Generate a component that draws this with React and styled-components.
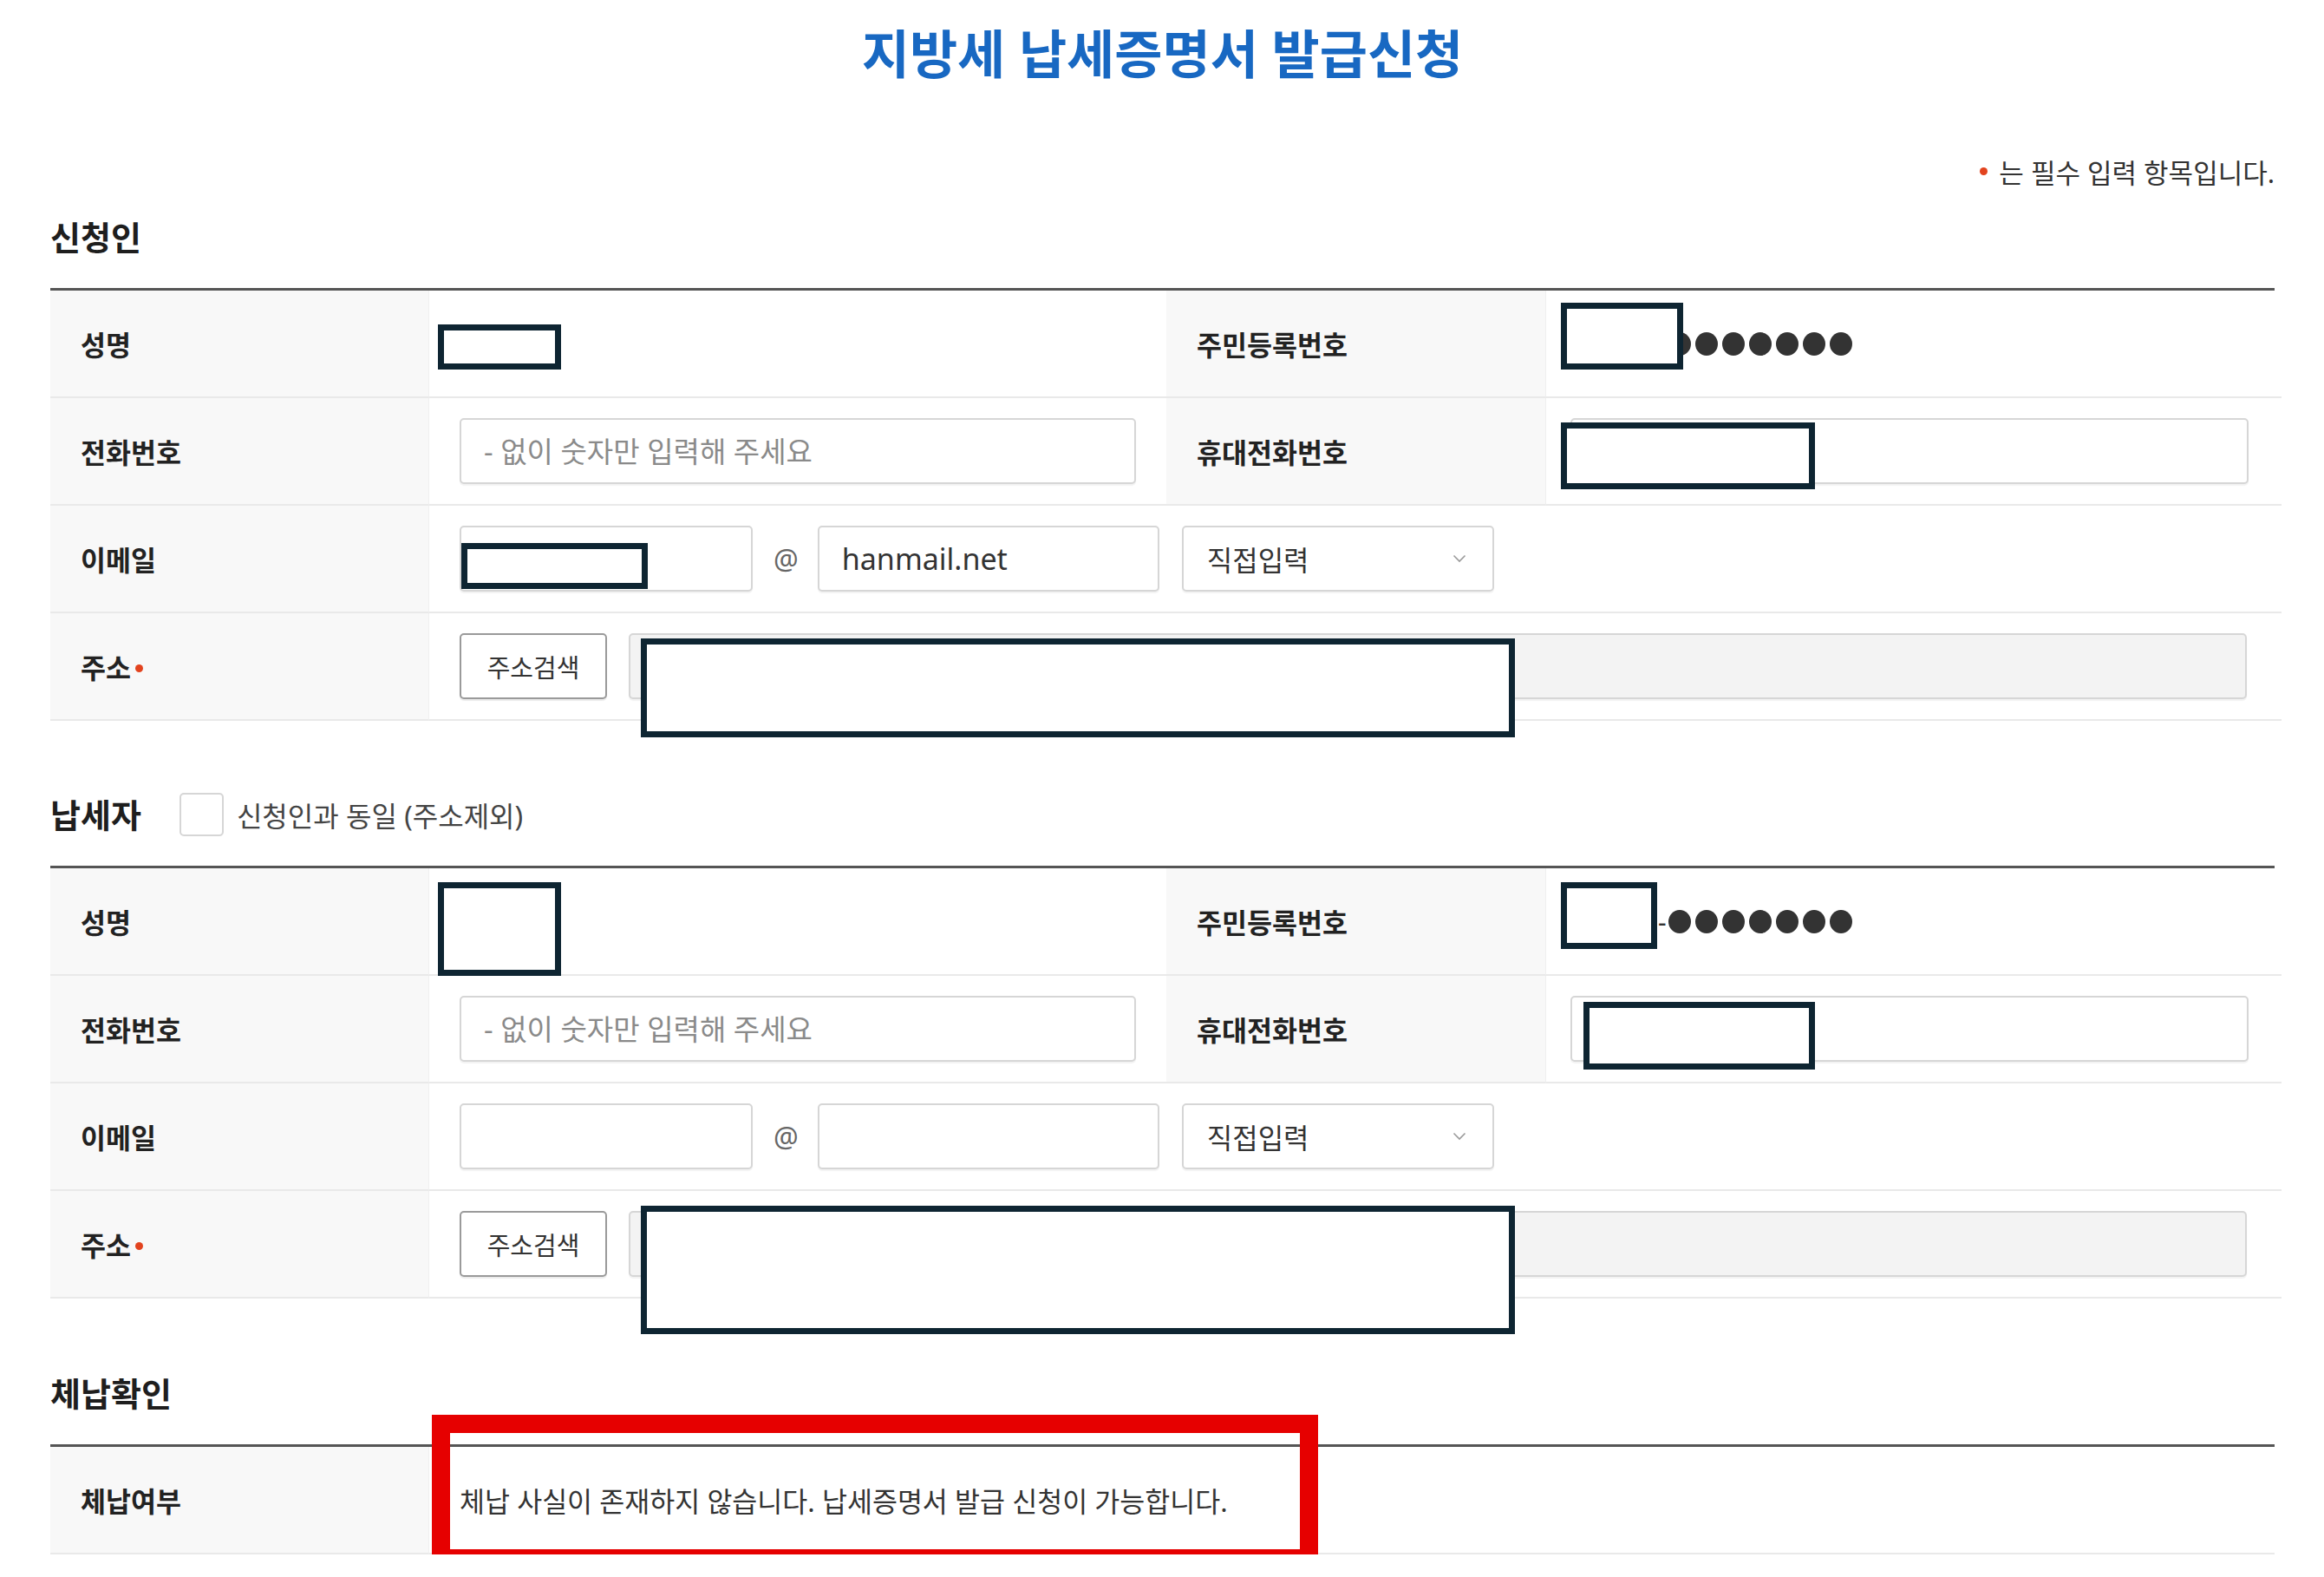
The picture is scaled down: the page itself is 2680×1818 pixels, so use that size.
import React from "react";
import styled, { createGlobalStyle } from "styled-components";

const GlobalStyle = createGlobalStyle`
  html, body { margin: 0; padding: 0; background: #ffffff; }
  body {
    font-family: "Noto Sans", "Noto Sans CJK KR", sans-serif;
    color: #222222;
  }
  * { box-sizing: border-box; }
`;

const Page = styled.div`
  width: 2565px;
  margin-left: 58px;
  position: relative;
`;

const Title = styled.h1`
  margin: 0;
  height: 125px;
  line-height: 125px;
  text-align: center;
  font-size: 60px;
  font-weight: 700;
  color: #1868c2;
`;

const RequiredNote = styled.div`
  display: flex;
  justify-content: flex-end;
  align-items: center;
  gap: 13px;
  margin-top: 52px;
  height: 40px;
  font-size: 31px;
  color: #333333;
`;

const RedDot = styled.span`
  display: inline-block;
  width: 9px;
  height: 9px;
  border-radius: 50%;
  background: #e2431e;
  flex: none;
  margin-top: ${(p) => p.$down || 0}px;
`;

const SectionHead = styled.div`
  display: flex;
  align-items: center;
  height: 50px;
  margin-top: ${(p) => p.$top}px;
  margin-bottom: 34px;
`;

const Heading = styled.h2`
  margin: 0;
  font-size: 38px;
  font-weight: 700;
  color: #1e1e1e;
  line-height: 50px;
`;

const CheckBox = styled.span`
  display: inline-block;
  width: 51px;
  height: 50px;
  margin-left: 44px;
  border: 2px solid #d6d6d6;
  border-radius: 5px;
  background: #ffffff;
`;

const CheckLabel = styled.span`
  margin-left: 15px;
  font-size: 32px;
  color: #444444;
`;

const Table = styled.div`
  display: grid;
  grid-template-columns: 436px 851px 437px 1fr;
  border-top: 3px solid #555555;
`;

const LabelCell = styled.div`
  display: flex;
  align-items: center;
  height: 124px;
  padding-left: 35px;
  background: #f8f8f8;
  border-bottom: 2px solid #e9e9e9;
  font-size: 31.5px;
  font-weight: 700;
  color: #222222;
  gap: 5px;
`;

const ValueCell = styled.div`
  position: relative;
  display: flex;
  align-items: center;
  height: 124px;
  padding: 0 ${(p) => p.$pr ?? 38}px 0 ${(p) => p.$pl ?? 35}px;
  background: #ffffff;
  border-bottom: 2px solid #e9e9e9;
  border-left: 1px solid #efefef;
  grid-column: span ${(p) => p.$span || 1};
  font-size: ${(p) => p.$fs || 32}px;
  color: #333333;
`;

const TextInput = styled.input`
  height: 76px;
  width: ${(p) => (p.$w ? `${p.$w}px` : "100%")};
  flex: ${(p) => (p.$grow ? 1 : "none")};
  padding: 0 26px;
  border: 2px solid #d6d6d6;
  border-radius: 5px;
  box-shadow: 0 2px 1px rgba(0, 0, 0, 0.05);
  background: ${(p) => (p.$disabled ? "#f3f3f3" : "#ffffff")};
  font-family: inherit;
  font-size: ${(p) => p.$fs || 33}px;
  color: #333333;
  outline: none;
  &::placeholder {
    color: #8a8a8a;
  }
`;

const At = styled.span`
  margin: 0 22px 0 24px;
  font-size: 32px;
  color: #666666;
`;

const SelectBox = styled.div`
  display: flex;
  align-items: center;
  justify-content: space-between;
  width: 360px;
  height: 76px;
  margin-left: 26px;
  padding: 0 30px 0 27px;
  border: 2px solid #d6d6d6;
  border-radius: 5px;
  box-shadow: 0 2px 1px rgba(0, 0, 0, 0.05);
  font-size: 32px;
  color: #333333;
`;

const SearchButton = styled.button`
  flex: none;
  width: 170px;
  height: 76px;
  margin-right: 25px;
  border: 2px solid #9a9a9a;
  border-radius: 5px;
  background: #ffffff;
  box-shadow: 0 2px 1px rgba(0, 0, 0, 0.08);
  font-family: inherit;
  font-size: 29px;
  color: #333333;
  padding: 0;
`;

const Masked = styled.div`
  display: flex;
  align-items: center;
`;

const Spacer = styled.span`
  display: inline-block;
  width: ${(p) => p.$w}px;
`;

const Hyphen = styled.span`
  font-size: 30px;
  color: #333333;
  margin-right: 2px;
`;

const Dots = styled.span`
  display: inline-flex;
  gap: 5px;
`;

const Dot = styled.span`
  display: inline-block;
  width: 26px;
  height: 27px;
  border-radius: 50%;
  background: #333333;
`;

const Redact = styled.div`
  position: absolute;
  z-index: 2;
  left: ${(p) => p.$l}px;
  top: ${(p) => p.$t}px;
  width: ${(p) => p.$w}px;
  height: ${(p) => p.$h}px;
  background: #ffffff;
  border: 7px solid #0e2532;
`;

const Annotation = styled.div`
  position: absolute;
  z-index: 3;
  left: 3px;
  top: -37px;
  width: 1022px;
  height: 176px;
  border: 21px solid #e60000;
  pointer-events: none;
`;

const Chevron = () => (
  <svg width="16" height="10" viewBox="0 0 16 10" fill="none">
    <polyline points="1.5,1.5 8,8 14.5,1.5" stroke="#9a9a9a" strokeWidth="1.6" />
  </svg>
);

const RRN = () => (
  <Masked>
    <Spacer $w={99} />
    <Hyphen>-</Hyphen>
    <Dots>
      {Array.from({ length: 7 }).map((_, i) => (
        <Dot key={i} />
      ))}
    </Dots>
  </Masked>
);

const PersonTable = ({ email, r }) => (
  <Table>
    <LabelCell>성명</LabelCell>
    <ValueCell>
      <Redact {...r.name} />
    </ValueCell>
    <LabelCell>주민등록번호</LabelCell>
    <ValueCell $pl={30}>
      <RRN />
      <Redact {...r.rrn} />
    </ValueCell>

    <LabelCell>전화번호</LabelCell>
    <ValueCell>
      <TextInput $w={780} placeholder="- 없이 숫자만 입력해 주세요" />
    </ValueCell>
    <LabelCell>휴대전화번호</LabelCell>
    <ValueCell $pl={28}>
      <TextInput $w={782} />
      <Redact {...r.mobile} />
    </ValueCell>

    <LabelCell>이메일</LabelCell>
    <ValueCell $span={3}>
      <TextInput $w={338} />
      <At>@</At>
      <TextInput $w={394} $fs={34} defaultValue={email} readOnly />
      <SelectBox>
        <span>직접입력</span>
        <Chevron />
      </SelectBox>
      {r.email && <Redact {...r.email} />}
    </ValueCell>

    <LabelCell>
      주소
      <RedDot $down={4} />
    </LabelCell>
    <ValueCell $span={3} $pr={40}>
      <SearchButton type="button">주소검색</SearchButton>
      <TextInput $grow $disabled readOnly />
      <Redact {...r.addr} />
    </ValueCell>
  </Table>
);

const applicant = {
  name: { $l: 10, $t: 39, $w: 142, $h: 52 },
  rrn: { $l: 17, $t: 14, $w: 141, $h: 77 },
  mobile: { $l: 17, $t: 28, $w: 293, $h: 77 },
  email: { $l: 37, $t: 43, $w: 215, $h: 53 },
  addr: { $l: 244, $t: 29, $w: 1008, $h: 114 },
};

const taxpayer = {
  name: { $l: 10, $t: 16, $w: 142, $h: 108 },
  rrn: { $l: 17, $t: 16, $w: 111, $h: 77 },
  mobile: { $l: 43, $t: 30, $w: 267, $h: 78 },
  addr: { $l: 244, $t: 17, $w: 1008, $h: 148 },
};

export default function App() {
  return (
    <>
      <GlobalStyle />
      <Page>
        <Title>지방세 납세증명서 발급신청</Title>
        <RequiredNote>
          <RedDot />
          <span>는 필수 입력 항목입니다.</span>
        </RequiredNote>

        <SectionHead $top={31}>
          <Heading>신청인</Heading>
        </SectionHead>
        <PersonTable email="hanmail.net" r={applicant} />

        <SectionHead $top={83}>
          <Heading>납세자</Heading>
          <CheckBox />
          <CheckLabel>신청인과 동일 (주소제외)</CheckLabel>
        </SectionHead>
        <PersonTable email="" r={taxpayer} />

        <SectionHead $top={84}>
          <Heading>체납확인</Heading>
        </SectionHead>
        <Table>
          <LabelCell>체납여부</LabelCell>
          <ValueCell $span={3} $fs={31.5}>
            체납 사실이 존재하지 않습니다. 납세증명서 발급 신청이 가능합니다.
            <Annotation />
          </ValueCell>
        </Table>
      </Page>
    </>
  );
}
